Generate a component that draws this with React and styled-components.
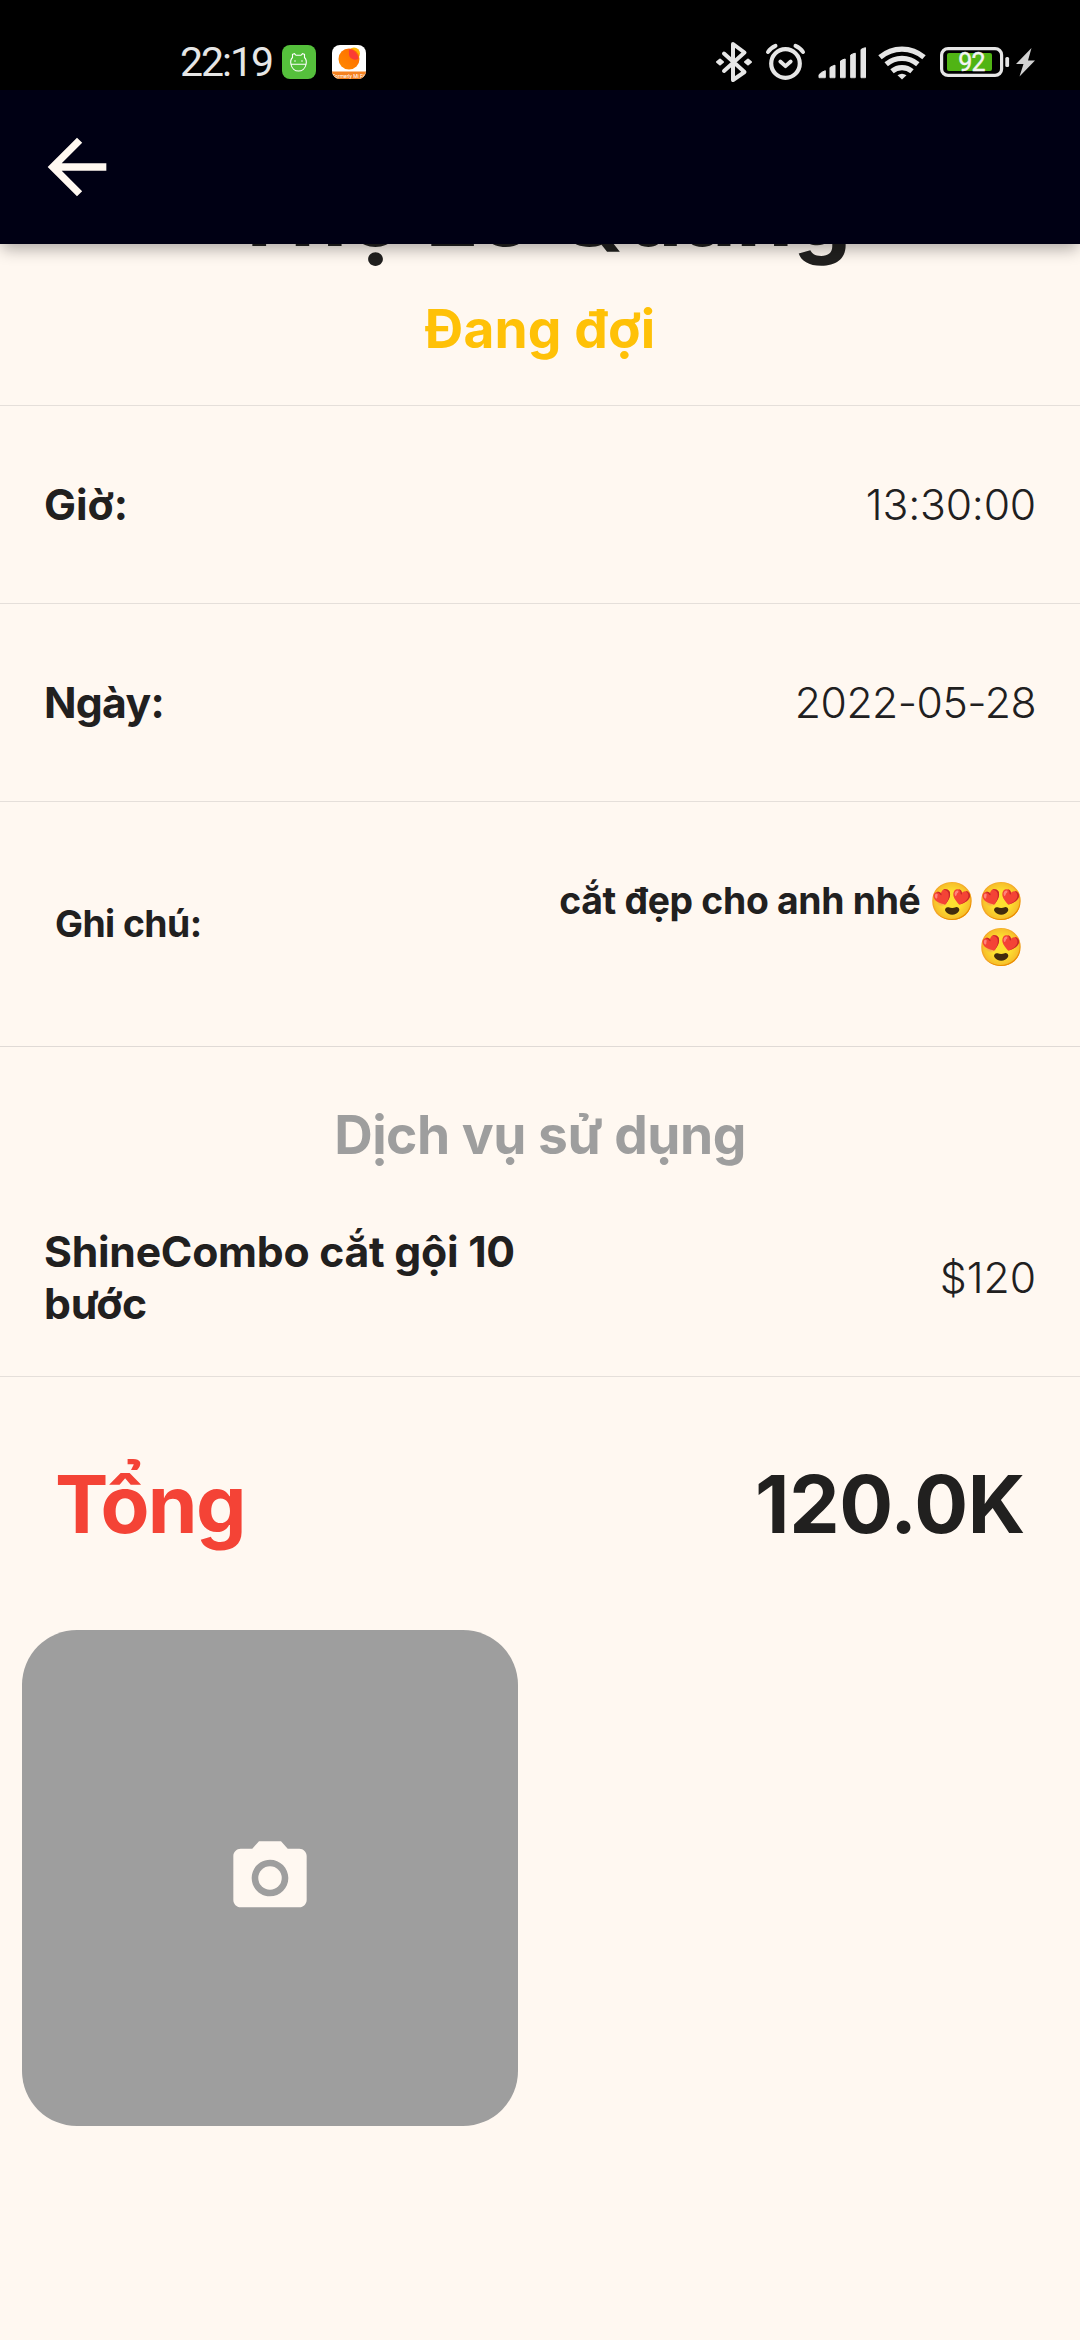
import React from "react";
import styled, { createGlobalStyle } from "styled-components";

const GlobalStyle = createGlobalStyle`
  *, *::before, *::after { box-sizing: border-box; }
  body {
    margin: 0;
    background: #fff8f1;
    color: #21201f;
    font-family: Inter, "Noto Sans", sans-serif;
  }
`;

const Screen = styled.div`
  display: flex;
  flex-direction: column;
  width: 1080px;
  height: 2340px;
  overflow: hidden;
  background: #fff8f1;
`;

const StatusBar = styled.div`
  position: relative;
  z-index: 2;
  display: flex;
  justify-content: space-between;
  height: 90px;
  padding: 42px 43px 0 180px;
  background: #000;
`;

const StatusLeft = styled.div`
  display: flex;
  align-items: center;
  height: 40px;
`;

const Clock = styled.span`
  width: 102px;
  font: 400 41px/40px Roboto, sans-serif;
  letter-spacing: -2px;
  color: #e6e6e6;
`;

const AppBadge = styled.svg`
  width: 34px;
  height: 34px;
  margin-right: 16px;
`;

const StatusIcons = styled.svg`
  width: 324px;
  height: 42px;
`;

const BatteryText = styled.text`
  font: 400 25px Roboto, sans-serif;
  letter-spacing: -0.8px;
`;

const AppBar = styled.header`
  position: relative;
  z-index: 1;
  display: flex;
  align-items: center;
  flex: none;
  height: 154px;
  padding: 0 33px;
  background: #000014;
  box-shadow: 0 7px 15px -2px rgba(0, 0, 0, 0.32);
`;

const BackButton = styled.button`
  display: flex;
  padding: 0;
  border: 0;
  background: none;
  color: #fff8f1;
`;

const Glyph = styled.svg`
  width: 88px;
  height: 88px;
  fill: currentColor;
`;

const Content = styled.main`
  display: flex;
  flex-direction: column;
`;

const Customer = styled.section`
  display: flex;
  flex-direction: column;
  align-items: center;
  height: 161px;
`;

const Name = styled.h1`
  margin: -87px 0 0;
  font-size: 92px;
  font-weight: 700;
  line-height: 112px;
  white-space: nowrap;
`;

const Status = styled.p`
  margin: 27px 0 0;
  font-size: 53.3px;
  font-weight: 700;
  line-height: 66px;
  letter-spacing: 0.1px;
  color: #ffc107;
`;

const Row = styled.div`
  display: flex;
  align-items: center;
  justify-content: space-between;
  flex: none;
  height: ${(p) => p.$height}px;
  padding: 0 ${(p) => p.$inset || 44}px;
  border-top: ${(p) => (p.$plain ? "0" : "1px solid #e5dfda")};
`;

const Label = styled.span`
  width: ${(p) => (p.$wrap ? "496px" : "auto")};
  font-size: 42.7px;
  font-weight: 700;
  line-height: 52px;
  letter-spacing: ${(p) => p.$tracking || 0}px;
`;

const Value = styled.span`
  font-size: 42.7px;
  font-weight: 300;
  line-height: 52px;
  letter-spacing: ${(p) => p.$tracking || 0}px;
`;

const NoteLabel = styled.span`
  font-size: 37.3px;
  font-weight: 700;
  line-height: 46px;
  letter-spacing: -0.55px;
`;

const NoteText = styled.span`
  width: 486px;
  margin-right: -1px;
  font-size: 37.3px;
  font-weight: 700;
  line-height: 46px;
  letter-spacing: -0.3px;
  text-align: right;
`;

const Emoji = styled.span`
  font-size: 37px;
  line-height: 0;
  letter-spacing: 2.5px;
`;

const Services = styled.section`
  display: flex;
  flex-direction: column;
  height: 330px;
  border-top: 1px solid #e0dad6;
`;

const SectionTitle = styled.h2`
  margin: 55px 0 0;
  font-size: 53.3px;
  font-weight: 700;
  line-height: 66px;
  letter-spacing: -0.5px;
  text-align: center;
  color: #9e9e9e;
`;

const Total = styled.span`
  font-size: 80px;
  font-weight: 700;
  line-height: 98px;
  letter-spacing: ${(p) => p.$tracking}px;
  color: ${(p) => p.$color || "inherit"};
`;

const PhotoGrid = styled.div`
  display: grid;
  grid-template-columns: 496px 496px;
  gap: 44px;
  padding: 0 22px;
`;

const PhotoTile = styled.button`
  display: flex;
  align-items: center;
  justify-content: center;
  height: 496px;
  padding: 0;
  border: 0;
  border-radius: 55px;
  background: #9e9e9e;
  color: #fff8f1;
`;

function PetBadge() {
  return (
    <AppBadge viewBox="0 0 34 34">
      <rect width="34" height="34" rx="8" fill="#55c03c" />
      <path
        d="M10.5 12.5V9.3l2-.6 1.5 1.6h5l1.5-1.6 2 .6v3.2c2 2 2 5 1.5 7-.8 4-4 6.5-7.5 6.5s-6.7-2.5-7.5-6.5c-.5-2-.5-5 1.5-7ZM9 19.3h15M13 15.2v1.5M20 15.2v1.5"
        fill="none"
        stroke="#fff"
        strokeWidth="1.1"
      />
    </AppBadge>
  );
}

function FitBadge() {
  return (
    <AppBadge viewBox="0 0 34 34">
      <defs>
        <clipPath id="fit">
          <rect width="34" height="34" rx="8" />
        </clipPath>
        <linearGradient id="sun" x1="1" y1="0" x2="0" y2="1">
          <stop offset="0" stopColor="#ff6a00" />
          <stop offset="1" stopColor="#ff8a00" />
        </linearGradient>
      </defs>
      <g clipPath="url(#fit)">
        <rect width="34" height="34" fill="#fff" />
        <circle cx="22" cy="8.5" r="6" fill="#ffb300" />
        <circle cx="17" cy="14" r="10.5" fill="url(#sun)" />
        <path d="M17.5 4a10.5 10.5 0 0 1 9 9.5 6 6 0 0 1-9.5-5.500 6 6 0 0 1 .5-4Z" fill="#fb3c34" />
        <rect y="26.5" width="34" height="8" fill="#f58220" />
        <text x="17" y="32.5" fontSize="5" fontFamily="Roboto, sans-serif" fill="#fff" textAnchor="middle">
          Formerly Mi Fit
        </text>
      </g>
    </AppBadge>
  );
}

/* Bluetooth, alarm, signal, Wi-Fi, battery and charging bolt */
function SystemIcons() {
  return (
    <StatusIcons viewBox="712 42 324 42" fill="none" stroke="#e6e6e6" strokeLinecap="round" strokeLinejoin="round">
      <path d="M723 53.5l20.5 18.5-11.5 8V44l11.5 8.5-20.5 18.5" strokeWidth="4" />
      <path d="M716 62l3-2.5 3 2.5-3 2.5zM744 62l3-2.5 3 2.5-3 2.5z" fill="#e6e6e6" strokeWidth="2" />
      <circle cx="784.5" cy="63.5" r="14.3" strokeWidth="4.2" />
      <path d="M779.3 61.5l5.2 4.7 5.2-4.7" strokeWidth="3.8" />
      <path d="M767 52q2.500-4 7.500-6.200M802 52q-2.500-4-7.500-6.200" strokeWidth="4" />
      <g fill="#e6e6e6" strokeWidth="1">
        <path d="M818 77.3v-2.6q2-2.700 6.300-4v6.600zM829 77.300V67.500q2-1.500 5-2.300v12.100zM839.500 77.300V61q2-1.500 4.700-2v18.300zM849.700 77.300V55q2-1.300 4.600-1.800v24.100zM860 77.300V49.500q2-1.300 4.500-1.800v29.600z" />
      </g>
      <g strokeWidth="5.2" strokeLinecap="butt">
        <path d="M879 57.3a33.5 33.5 0 0 1 44 0M885.2 64.3a24 24 0 0 1 31.6 0M891 71.2a15.5 15.5 0 0 1 20 0" />
      </g>
      <path d="M896.5 75.3q4.5-3.2 9 0l-4.5 4.2z" fill="#e6e6e6" stroke="none" />
      <rect x="940.6" y="48.6" width="60" height="26.8" rx="6.5" strokeWidth="3.2" />
      <rect x="946" y="53" width="45" height="18" rx="2" fill="#50b414" stroke="none" />
      <rect x="1004.3" y="57" width="3.8" height="10" rx="1.5" fill="#e6e6e6" stroke="none" />
      <BatteryText x="970.5" y="71" textAnchor="middle" fill="#f4f4f4" stroke="#f4f4f4" strokeWidth="0.4">
        92
      </BatteryText>
      <path d="M1030.5 48l-15.5 16h7.5l-4 12.5 15.5-16h-7z" fill="#d2d2d2" stroke="none" />
    </StatusIcons>
  );
}

export default function App() {
  return (
    <Screen>
      <GlobalStyle />
      <StatusBar>
        <StatusLeft>
          <Clock>22:19</Clock>
          <PetBadge />
          <FitBadge />
        </StatusLeft>
        <SystemIcons />
      </StatusBar>
      <AppBar>
        <BackButton aria-label="Back">
          <Glyph viewBox="0 0 24 24">
            <path d="M20 11H7.83l5.59-5.59L12 4l-8 8 8 8 1.41-1.41L7.83 13H20v-2z" />
          </Glyph>
        </BackButton>
      </AppBar>
      <Content>
        <Customer>
          <Name>Thợ Lê Quang</Name>
          <Status>Đang đợi</Status>
        </Customer>
        <Row $height={198}>
          <Label>Giờ:</Label>
          <Value $tracking={-0.2}>13:30:00</Value>
        </Row>
        <Row $height={198}>
          <Label $tracking={-0.7}>Ngày:</Label>
          <Value $tracking={-0.5}>2022-05-28</Value>
        </Row>
        <Row $height={245} $inset={55}>
          <NoteLabel>Ghi chú:</NoteLabel>
          <NoteText>
            cắt đẹp cho anh nhé <Emoji>😍😍</Emoji>
            <br />
            <Emoji>😍</Emoji>
          </NoteText>
        </Row>
        <Services>
          <SectionTitle>Dịch vụ sử dụng</SectionTitle>
          <Row $height={220} $plain>
            <Label $wrap $tracking={-0.25}>
              ShineCombo cắt gội 10 bước
            </Label>
            <Value>$120</Value>
          </Row>
        </Services>
        <Row $height={254} $inset={55}>
          <Total $tracking={-1.7} $color="#f44336">
            Tổng
          </Total>
          <Total $tracking={-0.4}>120.0K</Total>
        </Row>
        <PhotoGrid>
          <PhotoTile aria-label="Camera">
            <Glyph viewBox="0 0 24 24">
              <circle cx="12" cy="12" r="3.2" />
              <path d="M9 2L7.17 4H4c-1.1 0-2 .9-2 2v12c0 1.1.9 2 2 2h16c1.1 0 2-.9 2-2V6c0-1.1-.9-2-2-2h-3.17L15 2H9zm3 15c-2.76 0-5-2.24-5-5s2.24-5 5-5 5 2.24 5 5-2.24 5-5 5z" />
            </Glyph>
          </PhotoTile>
        </PhotoGrid>
      </Content>
    </Screen>
  );
}
